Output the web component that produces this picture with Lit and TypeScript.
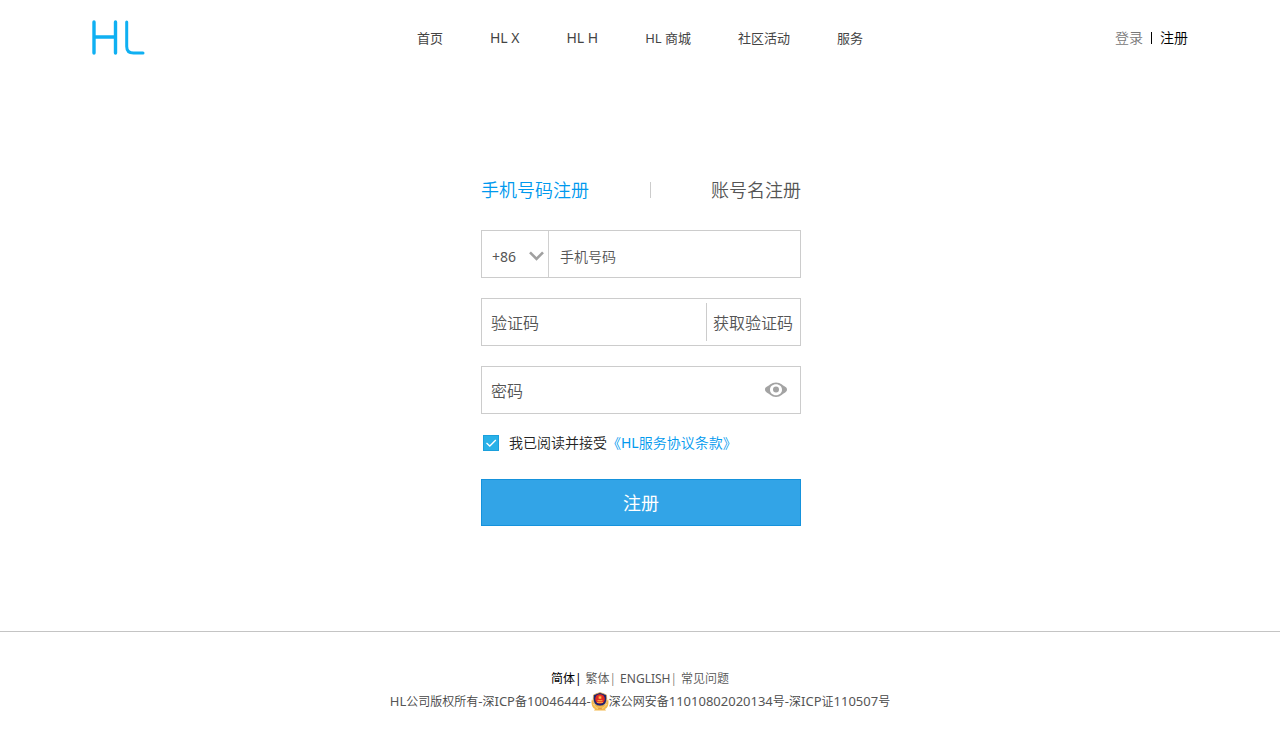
import { LitElement, html, css } from "lit";
import { customElement } from "lit/decorators.js";

@customElement("site-header")
class SiteHeader extends LitElement {
  static styles = css`
    :host { display: block; }
    .bar {
      display: grid;
      grid-template-columns: 1fr auto 1fr;
      align-items: center;
      height: 76px;
      padding: 0 92px;
    }
    .logo { display: block; width: 53px; height: 36px; }
    .logo svg { display: block; }
    .nav { display: flex; gap: 47px; font-size: 13px; line-height: 20px; font-weight: 400; }
    .latin { font-size: 14px; }
    a { color: #444; text-decoration: none; white-space: nowrap; }
    .account {
      display: flex;
      justify-content: flex-end;
      align-items: center;
      gap: 8px;
      font-size: 14px;
      line-height: 20px;
    }
    .account .login { color: #777; }
    .account .signup { color: #000; }
    .sep { width: 1px; height: 12px; background: #000; }
  `;
  render() {
    return html`
      <header class="bar">
        <a class="logo" href="#" aria-label="HL">
          <svg width="53" height="36" viewBox="0 0 53 36" fill="none" stroke="#0fb0f2" stroke-width="3.4" stroke-linecap="round" stroke-linejoin="round">
            <path d="M2 2V33M23.5 2V33M2 17H23.5" />
            <path d="M34.7 2V26.500Q34.700 33 41.500 33H51" stroke-width="3" />
          </svg>
        </a>
        <nav class="nav">
          <a href="#">首页</a>
          <a class="latin" href="#">HL X</a>
          <a class="latin" href="#">HL H</a>
          <a href="#">HL 商城</a>
          <a href="#">社区活动</a>
          <a href="#">服务</a>
        </nav>
        <div class="account">
          <a class="login" href="#">登录</a><span class="sep"></span><a class="signup" href="#">注册</a>
        </div>
      </header>
    `;
  }
}

@customElement("register-form")
class RegisterForm extends LitElement {
  static styles = css`
    :host { display: block; }
    * { box-sizing: border-box; }
    form { display: flex; flex-direction: column; width: 320px; max-width: 100%; }
    button, input, select {
      font-family: inherit;
      font-weight: inherit;
      margin: 0;
      padding: 0;
      border: 0;
      border-radius: 0;
      background: transparent;
      color: #555;
      outline: none;
    }
    button { cursor: pointer; }
    ::placeholder { color: #555; opacity: 1; }
    .tabs { display: flex; align-items: center; justify-content: space-between; margin-bottom: 27px; }
    .tab { font-size: 18px; line-height: 26px; text-align: left; white-space: nowrap; }
    .active { color: #0099ee; }
    .split { width: 1px; height: 16px; background: #ccc; }
    .field {
      display: flex;
      height: 48px;
      border: 1px solid #ccc;
      margin-bottom: 20px;
    }
    .box { flex: 1; min-width: 0; padding: 2px 9px 0; font-size: 16px; }
    .phone .box { padding: 4px 11px 0; font-size: 14px; }
    .code { display: grid; width: 67px; border-right: 1px solid #d0d0d0; align-items: center; padding-top: 4px; }
    .code select, .code svg { grid-area: 1 / 1; }
    .code select { appearance: none; width: 100%; height: 100%; padding-left: 10px; font-size: 14px; font-weight: 400; }
    .code svg { justify-self: end; margin-right: 4px; pointer-events: none; }
    .fetch {
      align-self: center;
      height: 38px;
      padding: 0 7px 0 6px;
      border-left: 1px solid #ccc;
      font-size: 16px;
      white-space: nowrap;
    }
    .eye { width: 48px; display: grid; place-items: center; }
    .agree { display: flex; align-items: center; padding-left: 2px; font-size: 14px; line-height: 18px; color: #222; }
    .check { display: grid; width: 16px; height: 16px; margin-right: 10px; }
    .check input, .check svg { grid-area: 1 / 1; width: 16px; height: 16px; }
    .check input { appearance: none; background: #29b1e8; border: 1px solid #1ba0dc; }
    .check svg { pointer-events: none; visibility: hidden; z-index: 1; }
    .check input:checked + svg { visibility: visible; }
    .terms { color: #0099ee; text-decoration: none; white-space: nowrap; }
    .latin { font-weight: 400; }
    .submit {
      height: 47px;
      margin-top: 27px;
      padding-bottom: 2px;
      background: #32a4e7;
      border: 1px solid #1592dc;
      color: #fff;
      font-size: 18px;
      font-weight: 400;
    }
  `;
  render() {
    return html`
      <form @submit=${(e: Event) => e.preventDefault()}>
        <div class="tabs">
          <button type="button" class="tab active">手机号码注册</button>
          <span class="split"></span>
          <button type="button" class="tab">账号名注册</button>
        </div>
        <div class="field phone">
          <div class="code">
            <select aria-label="国家代码"><option>+86</option></select>
            <svg width="15" height="10" viewBox="0 0 15 10" fill="none" stroke="#a0a0a0" stroke-width="2.600"><path d="M1 1.300L7.500 8L14 1.300" /></svg>
          </div>
          <input class="box" type="tel" placeholder="手机号码" aria-label="手机号码" />
        </div>
        <div class="field">
          <input class="box" type="text" placeholder="验证码" aria-label="验证码" />
          <button type="button" class="fetch">获取验证码</button>
        </div>
        <div class="field">
          <input class="box" type="password" placeholder="密码" aria-label="密码" />
          <button type="button" class="eye" aria-label="显示密码">
            <svg width="22" height="16" viewBox="0 0 22 16">
              <path fill="#a3a3a3" fill-rule="evenodd" d="M0 7.500C0 5 3 4.500 5 2.600Q7.700.5 11 .5T17 2.600C19 4.500 22 5 22 7.500C22 10.200 19 10.800 17 12.800Q14.300 15 11 15T5 12.800C3 10.800 0 10.200 0 7.500ZM11 2.300C7.500 2.300 5 4.600 5 7.700S7.500 13.200 11 13.200S17 10.800 17 7.700S14.500 2.300 11 2.300Z" />
              <circle cx="11" cy="7.500" r="3" fill="#a3a3a3" />
            </svg>
          </button>
        </div>
        <div class="agree">
          <span class="check">
            <input id="agree" type="checkbox" checked />
            <svg viewBox="0 0 16 16" fill="none" stroke="#fff" stroke-width="1.300"><path d="M3.500 8L6.800 11L12.800 5" /></svg>
          </span>
          <label for="agree">我已阅读并接受</label>
          <a class="terms" href="#">《<span class="latin">HL</span>服务协议条款》</a>
        </div>
        <button class="submit" type="submit">注册</button>
      </form>
    `;
  }
}

@customElement("site-footer")
class SiteFooter extends LitElement {
  static styles = css`
    :host { display: block; border-top: 1px solid #c4c4c4; padding: 36px 16px 37px; color: #444; font-size: 12px; }
    .row { display: flex; justify-content: center; align-items: center; flex-wrap: wrap; line-height: 22px; }
    .langs { gap: 0 4px; }
    .langs a { color: #555; text-decoration: none; }
    .langs .on { color: #000; font-weight: 400; }
    .latin { font-size: 13px; font-weight: 400; color: #555; }
    .langs .latin { font-size: 12px; }
    .badge { display: block; }
  `;
  render() {
    return html`
      <footer>
        <div class="row langs">
          <a class="on" href="#">简体|</a><a href="#">繁体|</a><a href="#"><span class="latin">ENGLISH</span>|</a><a href="#">常见问题</a>
        </div>
        <div class="row">
          <span><span class="latin">HL</span>公司版权所有<span class="latin">-</span>深<span class="latin">ICP</span>备<span class="latin">10046444-</span></span>
          <svg class="badge" width="18" height="20" viewBox="0 0 18 20">
            <path d="M1 7C-.5 12 1.500 16 4 17L3 18.500L9 18.500L15 18.500L14 17C16.500 16 18.500 12 17 7L14 13H4Z" fill="#f3b84a" />
            <path d="M2 12Q5 17 9 17T16 12" fill="none" stroke="#f9dc90" stroke-width=".8" />
            <path d="M9 .5L12 1.500L15.500 3Q16.500 10 13.500 12.500Q11.500 14 9 14T4.500 12.500Q1.500 10 2.500 3L6 1.500Z" fill="#1b2470" stroke="#efb04a" stroke-width=".7" />
            <circle cx="9" cy="7" r="4.800" fill="#e22a20" />
            <path d="M9 3.200L9.700 4.800H11.200L10 5.800L10.500 7.300L9 6.400L7.500 7.300L8 5.800L6.800 4.800H8.300ZM6.500 8.300H11.500V9.300H6.500ZM6 10H12V10.700H6Z" fill="#ffc24a" />
            <path d="M7 15.800Q9 16.800 11 15.800L10.500 17.300H7.500Z" fill="#e08a35" />
          </svg>
          <span>深公网安备<span class="latin">11010802020134</span>号<span class="latin">-</span>深<span class="latin">ICP</span>证<span class="latin">110507</span>号</span>
        </div>
      </footer>
    `;
  }
}

@customElement("app-root")
class AppRoot extends LitElement {
  static styles = css`
    :host {
      display: flex;
      flex-direction: column;
      min-height: 100vh;
      background: #fff;
      font-family: "Noto Sans", "Noto Sans CJK SC", sans-serif;
      font-weight: 350;
    }
    main { flex: 1; display: flex; justify-content: center; padding: 101px 0 40px 2px; }
  `;
  render() {
    return html`
      <site-header></site-header>
      <main><register-form></register-form></main>
      <site-footer></site-footer>
    `;
  }
}
